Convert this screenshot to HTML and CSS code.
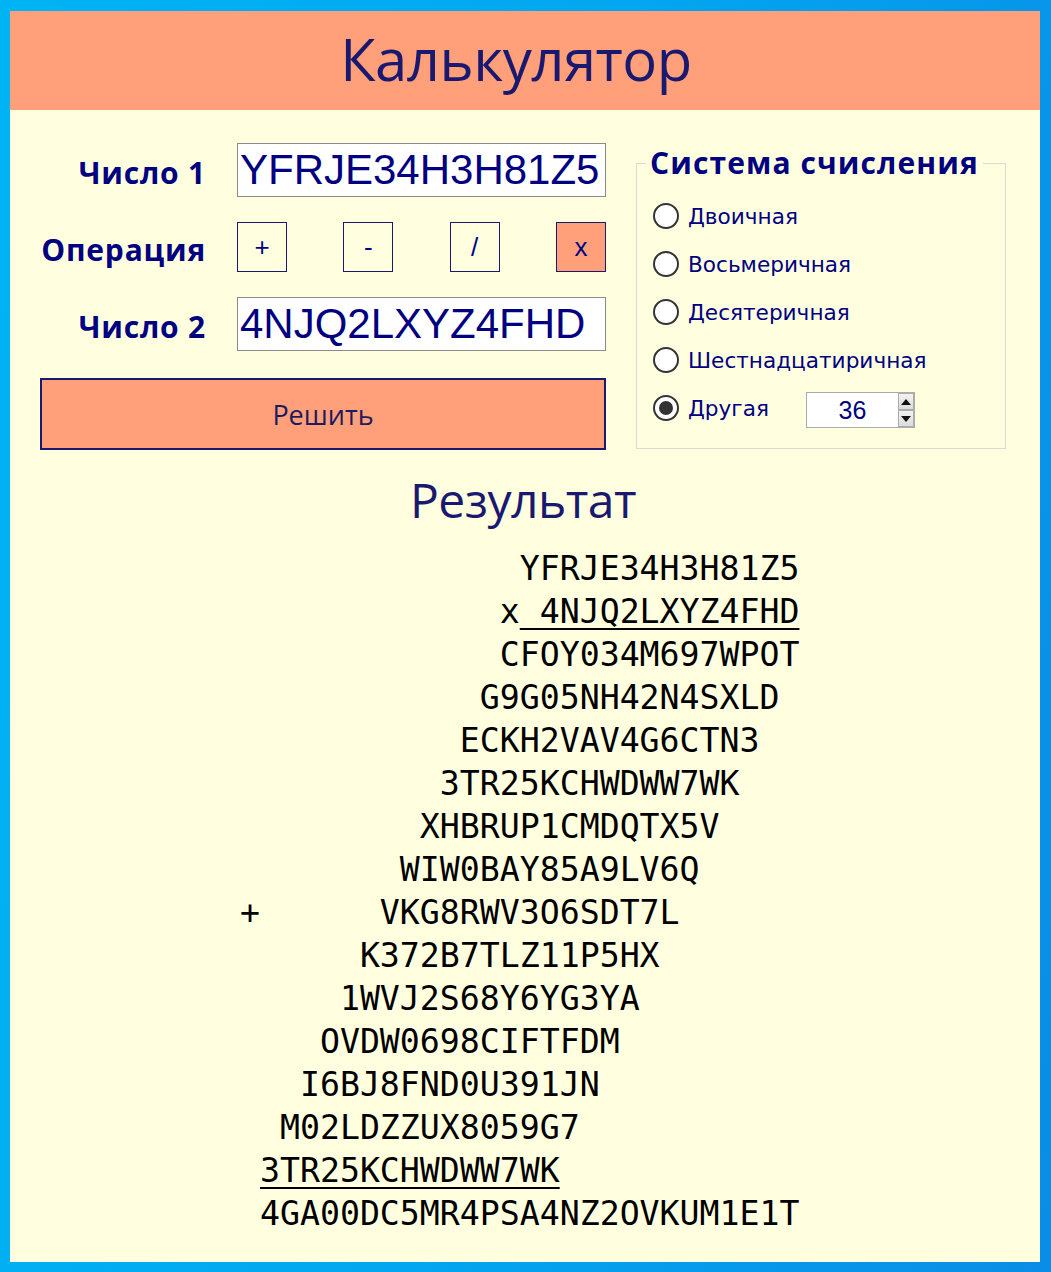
FILE: index.html
```html
<!DOCTYPE html>
<html lang="ru">
<head>
<meta charset="utf-8">
<title>Калькулятор</title>
<link rel="stylesheet" href="styles.css">
</head>
<body>
<div class="window">
  <header class="titlebar"><h1 class="title">Калькулятор</h1></header>
  <main class="content">
    <div class="top">
      <div class="form">
        <span class="lbl">Число 1</span>
        <div class="field">YFRJE34H3H81Z5</div>
        <span class="lbl">Операция</span>
        <div class="ops">
          <span class="op">+</span>
          <span class="op">-</span>
          <span class="op">/</span>
          <span class="op op-active">x</span>
        </div>
        <span class="lbl">Число 2</span>
        <div class="field">4NJQ2LXYZ4FHD</div>
        <div class="solve">Решить</div>
      </div>
      <fieldset class="base">
        <legend class="base-title">Система счисления</legend>
        <div class="radios">
          <div class="radio"><span class="dot"></span><span class="rlabel">Двоичная</span></div>
          <div class="radio"><span class="dot"></span><span class="rlabel">Восьмеричная</span></div>
          <div class="radio"><span class="dot"></span><span class="rlabel">Десятеричная</span></div>
          <div class="radio"><span class="dot"></span><span class="rlabel">Шестнадцатиричная</span></div>
          <div class="radio"><span class="dot dot-on"></span><span class="rlabel rlabel-fixed">Другая</span>
            <div class="spin"><span class="spin-val">36</span><span class="spin-btns"><span class="spin-btn"><span class="tri-up"></span></span><span class="spin-btn"><span class="tri-down"></span></span></span></div>
          </div>
        </div>
      </fieldset>
    </div>
    <h2 class="result-title">Результат</h2>
    <div class="result">
      <div class="line">              YFRJE34H3H81Z5</div>
      <div class="line">             x<span class="ul"> 4NJQ2LXYZ4FHD</span></div>
      <div class="line">             CFOY034M697WPOT</div>
      <div class="line">            G9G05NH42N4SXLD</div>
      <div class="line">           ECKH2VAV4G6CTN3</div>
      <div class="line">          3TR25KCHWDWW7WK</div>
      <div class="line">         XHBRUP1CMDQTX5V</div>
      <div class="line">        WIW0BAY85A9LV6Q</div>
      <div class="line">+      VKG8RWV3O6SDT7L</div>
      <div class="line">      K372B7TLZ11P5HX</div>
      <div class="line">     1WVJ2S68Y6YG3YA</div>
      <div class="line">    OVDW0698CIFTFDM</div>
      <div class="line">   I6BJ8FND0U391JN</div>
      <div class="line">  M02LDZZUX8059G7</div>
      <div class="line"> <span class="ul">3TR25KCHWDWW7WK</span></div>
      <div class="line"> 4GA00DC5MR4PSA4NZ2OVKUM1E1T</div>
    </div>
  </main>
</div>
</body>
</html>
```
FILE: styles.css
```css
* { box-sizing: border-box; }
html, body { margin: 0; padding: 0; }
body {
  width: 1051px;
  height: 1272px;
  padding: 11px 11px 10px 10px;
  background: linear-gradient(100deg, #00b4f4 0%, #03a6f0 50%, #0a8de6 100%);
  overflow: hidden;
}
.window {
  width: 1030px;
  height: 1251px;
  background: #ffffe0;
  display: flex;
  flex-direction: column;
}
.titlebar {
  height: 99px;
  background: #ffa07a;
  display: flex;
  align-items: center;
  justify-content: center;
}
.title {
  margin: 0 18px 0 0;
  font-family: "Open Sans", sans-serif;
  font-weight: 400;
  font-size: 58px;
  letter-spacing: -0.5px;
  color: #191970;
  line-height: 1;
  padding-bottom: 4px;
}
.content {
  padding: 33px 34px 0 30px;
}
.top {
  display: flex;
  align-items: flex-start;
  gap: 30px;
}
.form {
  display: grid;
  grid-template-columns: 165px 369px;
  grid-template-rows: 54px 50px 54px 74px;
  column-gap: 32px;
  row-gap: 25px;
}
.lbl {
  align-self: center;
  text-align: right;
  font-family: "Open Sans", sans-serif;
  font-weight: 700;
  font-size: 30px;
  color: #000080;
  white-space: nowrap;
  letter-spacing: 0.8px;
  margin-right: -1px;
  padding-top: 4px;
}
.field {
  background: #fff;
  border: 1px solid #8a8a8a;
  font-family: "Liberation Sans", Arial, sans-serif;
  font-size: 42px;
  line-height: 52px;
  color: #000080;
  padding-left: 2px;
  white-space: nowrap;
  overflow: hidden;
}
.ops {
  display: flex;
  justify-content: space-between;
}
.op {
  width: 50px;
  height: 50px;
  border: 1px solid #191970;
  display: flex;
  align-items: center;
  justify-content: center;
  font-family: "Liberation Sans", Arial, sans-serif;
  font-size: 26px;
  color: #000080;
}
.op-active { background: #ffa07a; }
.solve {
  grid-column: 1 / -1;
  margin-top: 2px;
  background: #ffa07a;
  border: 2px solid #191970;
  display: flex;
  align-items: center;
  justify-content: center;
  font-family: "Open Sans", sans-serif;
  font-size: 27px;
  color: #1f1a5c;
}
.base {
  margin: 2px 0 0 0;
  width: 370px;
  border: 1px solid #d8dcd4;
  padding: 0 0 16px 9px;
}
.base-title {
  padding: 0 4px;
  font-family: "Open Sans", sans-serif;
  font-weight: 700;
  font-size: 30px;
  line-height: 36px;
  color: #000080;
  letter-spacing: 1.1px;
}
.radios {
  margin-top: 11px;
  display: flex;
  flex-direction: column;
}
.radio {
  height: 48px;
  display: flex;
  align-items: center;
  padding-left: 7px;
}
.dot {
  flex: none;
  width: 26px;
  height: 26px;
  border-radius: 50%;
  border: 2px solid #333;
  background: #fff;
  display: flex;
  align-items: center;
  justify-content: center;
}
.dot-on::after {
  content: "";
  width: 14px;
  height: 14px;
  border-radius: 50%;
  background: #333;
}
.rlabel {
  margin-left: 9px;
  font-family: "DejaVu Sans", Verdana, sans-serif;
  font-size: 21.6px;
  color: #000080;
}
.rlabel-fixed { width: 118px; flex: none; }
.spin {
  width: 109px;
  height: 36px;
  background: #fff;
  border: 1px solid #ababab;
  display: flex;
  margin-top: 4px;
}
.spin-val {
  flex: 1;
  display: flex;
  align-items: center;
  justify-content: center;
  font-family: "Liberation Sans", Arial, sans-serif;
  font-size: 25px;
  color: #000080;
}
.spin-btns {
  width: 16px;
  display: flex;
  flex-direction: column;
}
.spin-btn {
  flex: 1;
  background: linear-gradient(#f2f2f2, #dcdcdc);
  border: 1px solid #acacac;
  display: flex;
  align-items: center;
  justify-content: center;
}
.tri-up {
  width: 0; height: 0;
  border-left: 5px solid transparent;
  border-right: 5px solid transparent;
  border-bottom: 6px solid #111;
}
.tri-down {
  width: 0; height: 0;
  border-left: 5px solid transparent;
  border-right: 5px solid transparent;
  border-top: 6px solid #111;
}
.result-title {
  margin: 20px 0 0 0;
  text-align: center;
  font-family: "Open Sans", sans-serif;
  font-weight: 400;
  font-size: 48px;
  line-height: 60px;
  color: #191970;
  letter-spacing: -0.5px;
}
.result {
  margin: 17px 0 0 200px;
  font-family: "DejaVu Sans Mono", monospace;
  font-size: 33.2px;
  line-height: 43px;
  color: #000;
}
.line {
  height: 43px;
  white-space: pre;
}
.ul {
  text-decoration: underline;
  text-decoration-thickness: 2px;
  text-underline-offset: 5px;
}
```
